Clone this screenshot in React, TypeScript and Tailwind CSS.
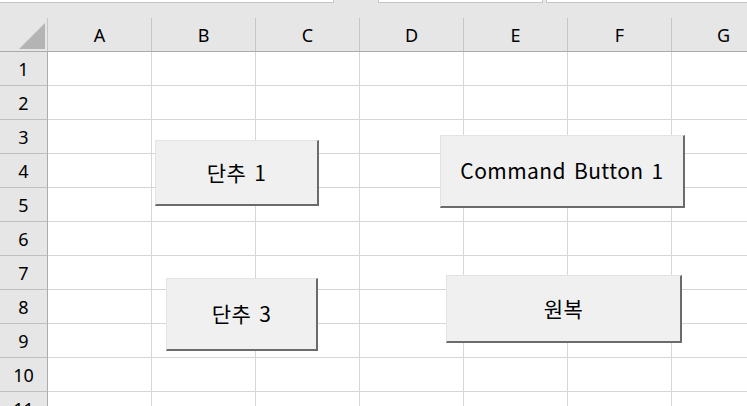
import React from "react";

const cols = ["A", "B", "C", "D", "E", "F", "G"];
const rows = [1, 2, 3, 4, 5, 6, 7, 8, 9, 10, 11];

function Btn({ label, cls }: { label: string; cls: string }) {
  return (
    <div
      className={`absolute flex items-center justify-center bg-[#f0f0f0] border-t border-l border-t-[#e3e3e3] border-l-[#e3e3e3] border-r-2 border-b-2 border-r-[#6b6b6b] border-b-[#6b6b6b] text-[21px] text-black tracking-[0.4px] [word-spacing:3px] ${cls}`}
      style={{ fontFamily: '"Noto Sans CJK KR", "Noto Sans", sans-serif' }}
    >
      {label}
    </div>
  );
}

export default function App() {
  return (
    <div
      className="relative w-[747px] h-[406px] overflow-hidden bg-white"
      style={{ fontFamily: '"Noto Sans", "Liberation Sans", sans-serif' }}
    >
      {/* top strip */}
      <div className="flex h-[3px] bg-[#e6e6e6]">
        <div className="w-[334px] bg-white border-r border-b border-[#c6c6c6]" />
        <div className="w-[44px]" />
        <div className="w-[165px] bg-white border-l border-r border-b border-[#c6c6c6]" />
        <div className="w-[3px]" />
        <div className="flex-1 bg-white border-l border-b border-[#c6c6c6]" />
      </div>

      {/* column header */}
      <div className="flex h-[49px] bg-[#e6e6e6] border-b border-[#ababab]">
        <div className="w-[48px] shrink-0 flex flex-col">
          <div className="h-[15px]" />
          <div className="flex-1 border-r border-[#c6c6c6] flex items-end justify-end pr-[2px] pb-[2px]">
            <svg width="26" height="26" viewBox="0 0 26 26">
              <polygon points="26,0 26,26 0,26" fill="#b4b4b4" />
            </svg>
          </div>
        </div>
        {cols.map((c) => (
          <div key={c} className="w-[104px] shrink-0 flex flex-col">
            <div className="h-[15px]" />
            <div className="flex-1 border-r border-[#c6c6c6] flex items-center justify-center text-[18px] text-black leading-none">
              {c}
            </div>
          </div>
        ))}
      </div>

      {/* rows */}
      {rows.map((r) => (
        <div key={r} className="flex h-[34px]">
          <div className="w-[48px] shrink-0 bg-[#e6e6e6] border-r border-b border-r-[#ababab] border-b-[#bfbfbf] flex items-center justify-center text-[18px] text-black leading-none">
            {r}
          </div>
          {cols.map((c) => (
            <div
              key={c}
              className="w-[104px] shrink-0 border-r border-b border-[#d6d6d6]"
            />
          ))}
        </div>
      ))}

      {/* floating controls */}
      <Btn label="단추 1" cls="left-[155px] top-[140px] w-[164px] h-[66px]" />
      <Btn label="Command Button 1" cls="left-[440px] top-[135px] w-[245px] h-[73px]" />
      <Btn label="단추 3" cls="left-[166px] top-[278px] w-[152px] h-[73px]" />
      <Btn label="원복" cls="left-[446px] top-[275px] w-[236px] h-[68px]" />
    </div>
  );
}
